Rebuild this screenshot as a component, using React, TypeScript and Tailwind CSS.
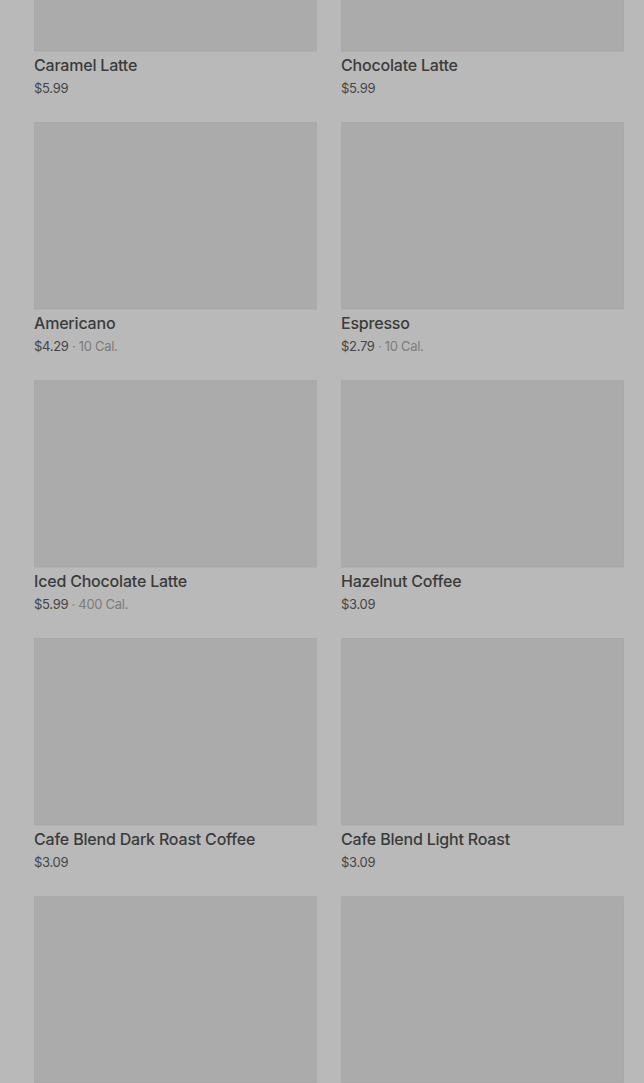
const items: { name: string; price: string; cal?: string }[] = [
  { name: 'Caramel Latte', price: '$5.99' },
  { name: 'Chocolate Latte', price: '$5.99' },
  { name: 'Americano', price: '$4.29', cal: '10 Cal.' },
  { name: 'Espresso', price: '$2.79', cal: '10 Cal.' },
  { name: 'Iced Chocolate Latte', price: '$5.99', cal: '400 Cal.' },
  { name: 'Hazelnut Coffee', price: '$3.09' },
  { name: 'Cafe Blend Dark Roast Coffee', price: '$3.09' },
  { name: 'Cafe Blend Light Roast', price: '$3.09' },
  { name: '', price: '' },
  { name: '', price: '' },
];

export default function App() {
  return (
    <div
      className="h-[1083px] overflow-hidden bg-[#b9b9b9]"
      style={{ fontFamily: 'Inter, "Noto Sans", sans-serif' }}
    >
      <div className="mt-[-136px] grid grid-cols-2 gap-x-6 pl-[34px] pr-5">
        {items.map((item, i) => (
          <div key={i} className="h-[258px]">
            <div className="h-[187px] border border-[#a9a9a9] bg-[#ababab] shadow-[0_1px_0_#b0b0b0]" />
            {item.name && (
              <>
                <div className="mt-1 text-[16px] font-medium leading-5 tracking-[-0.2px] text-[#3b3b3b]">
                  {item.name}
                </div>
                <div className="mt-1 text-[13px] leading-[18px] tracking-[-0.3px] text-[#454545]">
                  {item.price}
                  {item.cal && <span className="text-[#7c7c7c]"> · {item.cal}</span>}
                </div>
              </>
            )}
          </div>
        ))}
      </div>
    </div>
  );
}
